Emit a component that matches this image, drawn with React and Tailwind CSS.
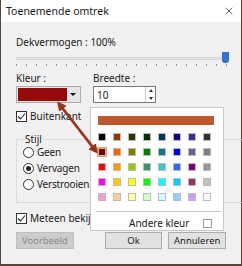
import { X } from 'lucide-react'

const palette = [
  ['#000000', '#993300', '#333300', '#003300', '#003366', '#000080', '#333399', '#333333'],
  ['#800000', '#ff6600', '#808000', '#008000', '#008080', '#0000ff', '#666699', '#808080'],
  ['#ff0000', '#ff9900', '#99cc00', '#339966', '#33cccc', '#3366ff', '#800080', '#969696'],
  ['#ff00ff', '#ffcc00', '#ffff00', '#00ff00', '#00ffff', '#00ccff', '#993366', '#c0c0c0'],
  ['#ff99cc', '#ffcc99', '#ffff99', '#ccffcc', '#ccffff', '#99ccff', '#cc99ff', '#ffffff'],
]

function CheckBox({ label }) {
  return (
    <div className="flex h-[12px] items-center gap-[3px]">
      <div className="flex h-[11px] w-[11px] items-center justify-center border border-[#333] bg-white">
        <svg width="9" height="9" viewBox="0 0 9 9">
          <path d="M1 4.5 L3.5 7 L8 1.5" fill="none" stroke="#222" strokeWidth="1.1" />
        </svg>
      </div>
      <span className="whitespace-nowrap text-[10px]">{label}</span>
    </div>
  )
}

function Radio({ label, checked }) {
  return (
    <div className="flex h-[14px] items-center gap-[3px]">
      <div className="flex h-[11px] w-[11px] items-center justify-center rounded-full border border-[#333] bg-white">
        {checked ? <div className="h-[5px] w-[5px] rounded-full bg-[#222]" /> : null}
      </div>
      <span className="text-[10px] tracking-[-0.2px]">{label}</span>
    </div>
  )
}

function ColorPopup() {
  return (
    <div className="absolute left-[89px] top-[107px] h-[124px] w-[134px] border border-[#c8c8c8] bg-white">
      <div className="ml-[7px] mt-[8px] h-[9px] w-[116px] bg-[#c0582e]" />
      <div className="ml-[6px] mt-[7px] flex flex-col gap-[5px]">
        {palette.map((row, r) => (
          <div key={r} className="flex gap-[5px]">
            {row.map((c, i) => (
              <div
                key={c}
                className={
                  r === 1 && i === 0
                    ? 'flex h-[10px] w-[10px] items-center justify-center border border-[#e8a060]'
                    : 'flex h-[10px] w-[10px] items-center justify-center'
                }
              >
                <div className="h-[8px] w-[8px] border border-[#bbb]" style={{ backgroundColor: c }} />
              </div>
            ))}
          </div>
        ))}
      </div>
      <div className="ml-[5px] mt-[9px] h-px w-[125px] bg-[#c8c8c8]" />
      <div className="mt-[6px] flex items-center">
        <span className="ml-[38px] text-[10px]">Andere kleur</span>
        <div className="ml-auto mr-[11px] h-[9px] w-[9px] border border-[#999] bg-white" />
      </div>
    </div>
  )
}

export default function App() {
  return (
    <div
      className="relative h-[266px] w-[242px] overflow-hidden bg-[#5b4636] text-[9.5px] leading-none text-[#1a1a1a]"
      style={{ fontFamily: '"Noto Sans", "Open Sans", sans-serif' }}
    >
      <div className="relative ml-[1px] h-[264px] w-[240px] bg-[#f0f0f0]">
        <div className="flex h-[22px] items-center justify-between bg-white pl-[5px] pr-[6px] text-[10.5px]">
          <span>Toenemende omtrek</span>
          <X size={12} strokeWidth={1.3} />
        </div>

        <div className="px-[15px]">
          <div className="mt-[15px] text-[10px]">Dekvermogen : 100%</div>

          <div className="relative mt-[8px] h-[14px]">
            <div className="absolute left-0 right-[-3px] top-[2px] h-[3px] border border-[#d8d8d8] bg-[#e6e6e6]" />
            <div className="absolute right-[-3px] top-[-3px] h-[11px] w-[7px] rounded-b-[3px] bg-[#2f74d0]" />
            <div className="absolute left-0 right-[-1px] top-[9px] flex justify-between">
              {Array.from({ length: 22 }).map((_, i) => (
                <div key={i} className="h-[2px] w-px bg-[#999]" />
              ))}
            </div>
          </div>

          <div className="mt-[4px] flex gap-[12px] text-[10px]">
            <div>
              <div className="h-[12px]">Kleur :</div>
              <div className="mt-[1px] flex h-[17px] w-[65px] border border-[#adadad] bg-[#e6e6e6] p-[1px]">
                <div className="flex-1 bg-[#960a0a]" />
                <div className="flex w-[12px] items-center justify-center">
                  <div className="h-0 w-0 border-x-[3px] border-t-[3px] border-x-transparent border-t-[#111]" />
                </div>
              </div>
            </div>
            <div>
              <div className="h-[12px]">Breedte :</div>
              <div className="mt-[1px] flex h-[17px] w-[63px] items-center border border-[#7a7a7a] bg-white">
                <span className="ml-[3px] flex-1">10</span>
                <div className="flex h-full w-[10px] flex-col border-l border-[#ccc]">
                  <div className="flex flex-1 items-center justify-center">
                    <div className="h-0 w-0 border-x-[2.5px] border-b-[3px] border-x-transparent border-b-[#333]" />
                  </div>
                  <div className="flex flex-1 items-center justify-center">
                    <div className="h-0 w-0 border-x-[2.5px] border-t-[3px] border-x-transparent border-t-[#333]" />
                  </div>
                </div>
              </div>
            </div>
          </div>

          <div className="mt-[7px]">
            <CheckBox label="Buitenkant" />
          </div>

          <div className="relative mt-[17px] h-[64px] w-[230px] border border-[#dcdcdc]">
            <span className="absolute left-[7px] top-[-6px] bg-[#f0f0f0] px-[1px] text-[10px]">Stijl</span>
            <div className="ml-[6px] mt-[5px] flex flex-col gap-[2px]">
              <Radio label="Geen" />
              <Radio label="Vervagen" checked />
              <Radio label="Verstrooien" />
            </div>
          </div>

          <div className="mt-[9px]">
            <CheckBox label="Meteen bekijken" />
          </div>

          <div className="mt-[8px] flex">
            <div className="flex h-[17px] w-[58px] items-center justify-center border border-[#bfbfbf] bg-[#cccccc] text-[#8a8a8a]">
              Voorbeeld
            </div>
            <div className="ml-[31px] flex h-[17px] w-[58px] items-center justify-center border border-[#adadad] bg-[#e1e1e1]">
              Ok
            </div>
            <div className="ml-[6px] flex h-[17px] w-[58px] items-center justify-center border border-[#adadad] bg-[#e1e1e1]">
              Annuleren
            </div>
          </div>
        </div>

        <ColorPopup />

        <svg className="absolute left-0 top-0" width="240" height="264" viewBox="0 0 240 264">
          <defs>
            <marker id="ah" viewBox="0 0 10 10" refX="5" refY="5" markerWidth="3.4" markerHeight="3.4" orient="auto-start-reverse">
              <path d="M0 0 L10 5 L0 10 z" fill="#9b3316" />
            </marker>
          </defs>
          <line x1="59" y1="105" x2="94" y2="150" stroke="#9b3316" strokeWidth="2.8" markerStart="url(#ah)" markerEnd="url(#ah)" />
        </svg>
      </div>
    </div>
  )
}
